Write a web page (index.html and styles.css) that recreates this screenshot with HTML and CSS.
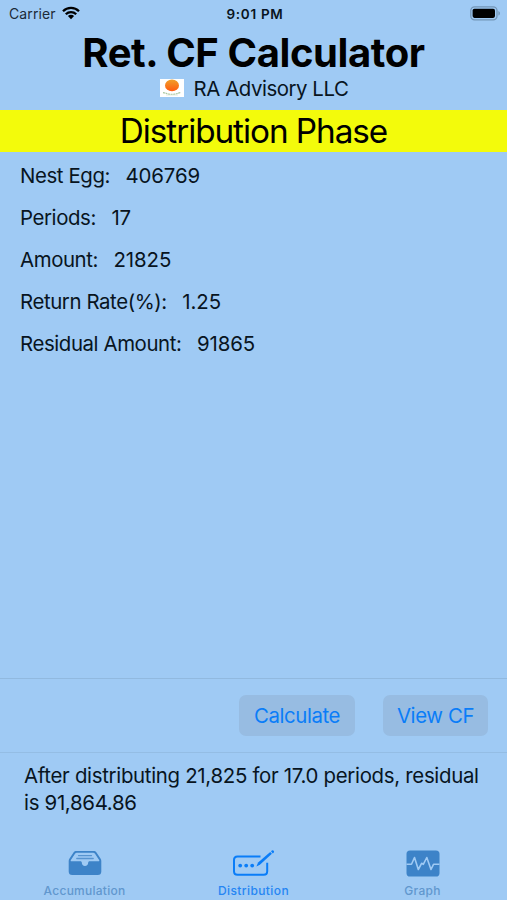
FILE: index.html
```html
<!DOCTYPE html>
<html lang="en">
<head>
    <meta charset="UTF-8">
    <meta name="viewport" content="width=device-width, initial-scale=1.0">
    <title>Ret. CF Calculator</title>
    <link rel="stylesheet" href="styles.css">
</head>
<body>
    <div class="status-bar">
        <div class="carrier">
            <span>Carrier</span>
            <svg class="wifi" viewBox="0 0 18 14" width="18" height="14">
                <path d="M1 5.2a11.4 11.4 0 0 1 16 0M3.8 8.2a7.4 7.4 0 0 1 10.4 0" fill="none" stroke="#000" stroke-width="2.3"/>
                <path d="M9 13.2L5.9 10.1a4.4 4.4 0 0 1 6.2 0z" fill="#000"/>
            </svg>
        </div>
        <span class="time">9:01 PM</span>
        <svg class="battery" viewBox="0 0 31 15" width="31" height="15">
            <rect x=".8" y=".8" width="26.2" height="13" rx="3.8" fill="none" stroke="#7395b6" stroke-width="1.3"/>
            <rect x="2.6" y="2.7" width="22.4" height="9.2" rx="1.8" fill="#000"/>
            <path d="M28.4 5v4.6c2-.8 2-3.8 0-4.6z" fill="#7395b6"/>
        </svg>
    </div>

    <h1>Ret. CF Calculator</h1>

    <div class="company">
        <svg class="logo" viewBox="0 0 24 18" width="24" height="18">
            <defs>
                <linearGradient id="sun" x1="0" y1="0" x2="0" y2="1">
                    <stop offset="0" stop-color="#f0a02c"/>
                    <stop offset="1" stop-color="#ff5a10"/>
                </linearGradient>
            </defs>
            <rect width="24" height="18" fill="#fff"/>
            <ellipse cx="12" cy="6.4" rx="7" ry="5.9" fill="url(#sun)"/>
            <path d="M3 13.6c3 .2 4 1.400 6 1.600s4 .2 6 0 3-1.400 6-1.600" fill="none" stroke="#a9c7a0" stroke-width="1.200" stroke-dasharray="2 .6"/>
            <path d="M6 16h12" stroke="#dbe8d8" stroke-width=".8"/>
        </svg>
        <span>RA Advisory LLC</span>
    </div>

    <h2>Distribution Phase</h2>

    <div class="fields">
        <div class="field"><span>Nest Egg:</span><span class="value">406769</span></div>
        <div class="field"><span>Periods:</span><span class="value">17</span></div>
        <div class="field"><span>Amount:</span><span class="value">21825</span></div>
        <div class="field"><span>Return Rate(%):</span><span class="value">1.25</span></div>
        <div class="field"><span>Residual Amount:</span><span class="value">91865</span></div>
    </div>

    <div class="actions">
        <button class="calculate">Calculate</button>
        <button class="view">View CF</button>
    </div>

    <p class="result">After distributing 21,825 for 17.0 periods, residual<br>is 91,864.86</p>

    <div class="tab-bar">
        <div class="tab">
            <svg viewBox="0 0 34 26" width="34" height="26">
                <path d="M8.500 1h17c1.300 0 2.200.4 3 1.400l4 6c.6.9.8 1.600.8 2.600v10.500c0 2.400-1.300 3.500-3.500 3.500H4.200C2 25 .7 23.900.7 21.500V11c0-1 .2-1.700.8-2.600l4-6c.8-1 1.700-1.400 3-1.400z" fill="#3d83c8"/>
                <path d="M8.800 2.700h16.400c.8 0 1.300.3 1.800 1l4.100 6.200c.5.8.2 1.400-.6 1.400h-8.800c-1 0-1.500.6-1.500 1.400 0 1.900-1.300 3.300-3.200 3.300s-3.200-1.400-3.200-3.300c0-.8-.5-1.400-1.500-1.400H3.500c-.8 0-1.100-.6-.6-1.400L7 3.700c.5-.7 1-1 1.800-1z" fill="#9fcaf4"/>
                <path d="M10.500 5.600h13M8.800 8.500h16.400" stroke="#5794d0" stroke-width="1.300" stroke-linecap="round"/>
            </svg>
            <span>Accumulation</span>
        </div>
        <div class="tab active">
            <svg viewBox="0 0 44 30" width="44" height="30">
                <path d="M28.500 7.500H5.500c-2.500 0-3.500 1-3.500 3.500v11.200c0 2.500 1 3.500 3.500 3.500h26.200c2.500 0 3.500-1 3.500-3.500v-8.500" fill="none" stroke="#0a7df8" stroke-width="2"/>
                <circle cx="8.200" cy="16.600" r="1.900" fill="#0a7df8"/>
                <circle cx="14.200" cy="16.600" r="1.900" fill="#0a7df8"/>
                <circle cx="20.200" cy="16.600" r="1.900" fill="#0a7df8"/>
                <path d="M24.400 17.400l1.700-3.900L38.200 2.900l1.700 1.900-12 10.900z" fill="#0a7df8"/>
                <path d="M39 2.200l.9-.8c1.100-.9 2.900.9 1.900 2l-1 1z" fill="#0a7df8"/>
            </svg>
            <span>Distribution</span>
        </div>
        <div class="tab graph">
            <svg viewBox="0 0 34 27" width="34" height="27">
                <rect x=".5" y=".5" width="33" height="26" rx="3.600" fill="#3d83c8"/>
                <path d="M.5 14.300h5l3-6.800 3.800 12 3.300-6.200 1.700 1 3.500-6.800 4.200 12 2.500-5.200h6" fill="none" stroke="#9fcaf4" stroke-width="1.600" stroke-linejoin="round"/>
            </svg>
            <span>Graph</span>
        </div>
    </div>
</body>
</html>
```
FILE: styles.css
```css
* {
    box-sizing: border-box;
}

body {
    margin: 0;
    height: 900px;
    display: flex;
    flex-direction: column;
    overflow: hidden;
    background-color: #9fcaf4;
    color: #081421;
    font-family: 'Inter', sans-serif;
    font-size: 20.4px;
    letter-spacing: -0.4px;
    white-space: nowrap;
}

.status-bar {
    height: 28px;
    flex: none;
    display: grid;
    grid-template-columns: 1fr auto 1fr;
    align-items: center;
    padding: 0 6px 0 9px;
    font-size: 14px;
    letter-spacing: 0.1px;
    line-height: 28px;
}

.carrier {
    display: flex;
    align-items: center;
    gap: 6px;
    color: #1c2a38;
}

.wifi {
    margin-bottom: 2px;
}

.time {
    font-size: 13.5px;
    font-weight: 600;
    letter-spacing: 0.7px;
}

.battery {
    justify-self: end;
    margin-bottom: 2px;
}

h1 {
    margin: 0;
    height: 48px;
    color: #000;
    font-size: 40px;
    font-weight: 700;
    line-height: 49px;
    text-align: center;
}

.company {
    height: 34px;
    display: flex;
    justify-content: center;
    gap: 10px;
    padding-left: 1px;
    letter-spacing: -0.45px;
    line-height: 26px;
}

.logo {
    margin-top: 3px;
}

h2 {
    margin: 0;
    height: 42px;
    background-color: #f3fb0b;
    color: #000;
    font-size: 33.3px;
    font-weight: 400;
    letter-spacing: -1.05px;
    line-height: 42px;
    text-align: center;
}

.fields {
    flex: 1;
    padding: 2px 20px;
}

.field {
    height: 42px;
    display: flex;
    gap: 15.5px;
    line-height: 43px;
}

.value {
    letter-spacing: -0.1px;
}

.actions {
    height: 75px;
    display: flex;
    justify-content: flex-end;
    gap: 28px;
    padding: 16px 19px 0 0;
    border-top: 1px solid #91b9df;
    border-bottom: 1px solid #94bde4;
}

button {
    height: 41px;
    padding: 0;
    border: none;
    border-radius: 7px;
    background-color: #97bce2;
    color: #0a7df8;
    font-family: inherit;
    font-size: 20.4px;
    letter-spacing: -0.4px;
    line-height: 42px;
}

.calculate {
    width: 116px;
}

.view {
    width: 105px;
}

.result {
    margin: 0;
    height: 91px;
    padding: 9px 24px;
    letter-spacing: -0.3px;
    line-height: 27px;
}

.tab-bar {
    height: 56px;
    display: grid;
    grid-template-columns: repeat(3, 1fr);
}

.tab {
    display: flex;
    flex-direction: column;
    align-items: center;
    justify-content: flex-end;
    gap: 6px;
    color: #6197ce;
    font-size: 12px;
    font-weight: 500;
    letter-spacing: 0.25px;
    line-height: 18px;
}

.tab.active {
    gap: 3px;
    color: #2585f3;
    letter-spacing: 0.4px;
}

.tab.graph {
    gap: 5px;
}
```
